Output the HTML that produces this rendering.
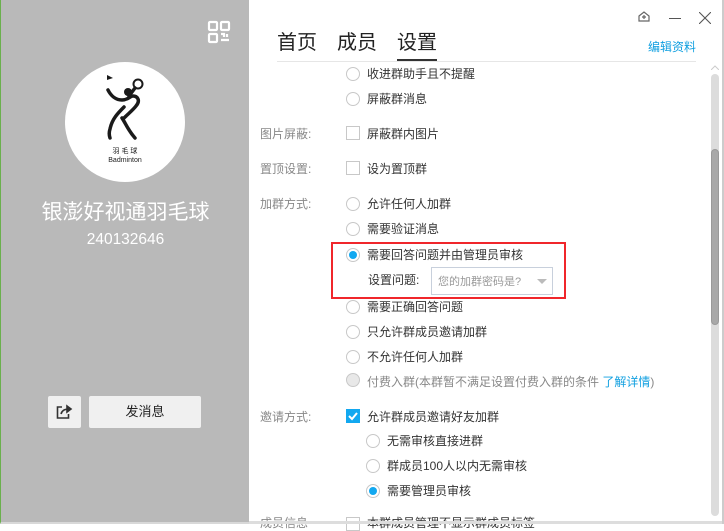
<!DOCTYPE html>
<html><head><meta charset="utf-8"><style>
*{margin:0;padding:0;box-sizing:border-box}
body{width:724px;height:524px;overflow:hidden;background:#fff;font-family:"Liberation Sans","Noto Sans CJK SC",sans-serif;position:relative}
.abs{position:absolute}
#left{left:0;top:0;width:249px;height:524px;background:#b9b9b9;border-left:1px solid #6ab04c;border-bottom:2px solid #d8d8d8}
.t{position:absolute;font-size:12px;color:#333;white-space:nowrap;line-height:14px}
.lbl{position:absolute;font-size:12px;color:#888;left:260px;line-height:14px}
.rad{position:absolute;width:14px;height:14px;border:1px solid #c8c8c8;border-radius:50%;background:#fff}
.rad.on::after{content:"";position:absolute;left:2px;top:2px;width:8px;height:8px;border-radius:50%;background:#12a8f0}
.chk{position:absolute;width:14px;height:14px;border:1px solid #c8c8c8;background:#fff}
</style></head><body>
<div id="left" class="abs">
 <svg class="abs" style="left:206px;top:20px" width="24" height="24" viewBox="0 0 24 24" fill="none" stroke="#fff" stroke-width="2.2">
  <rect x="2" y="2" width="8" height="8" rx="1"/><rect x="14" y="2" width="8" height="8" rx="1"/><rect x="2" y="14" width="8" height="8" rx="1"/>
  <path d="M14 14h3v3M20 14v3M14 20h8"/>
 </svg>
 <div class="abs" style="left:64px;top:62px;width:120px;height:120px;border-radius:50%;background:#fff"></div>
 <svg class="abs" style="left:64px;top:62px" width="120" height="120" viewBox="0 0 120 120" fill="none" stroke="#1a1a1a" stroke-width="3.5" stroke-linecap="round">
  <path d="M42 13l6 3-6 2z" fill="#1a1a1a" stroke="none"/>
  <circle cx="73" cy="22" r="4.5" stroke-width="2"/>
  <path d="M70 26l-6 8"/>
  <path d="M43 28c3 6 8 10 14 10 6 0 8-4 11-4 4 0 8 4 3 10-3 4-8 8-12 12"/>
  <path d="M59 45c-6 6-12 12-14 22-1 3-1 6 0 9"/>
  <path d="M57 56c4 6 6 12 13 20"/>
  <circle cx="63" cy="30" r="4" fill="#1a1a1a" stroke="none"/>
 </svg>
 <div class="abs" style="left:64px;top:146px;width:120px;text-align:center;font-size:7px;color:#222">羽 毛 球</div>
 <div class="abs" style="left:64px;top:157px;width:120px;text-align:center;font-size:7px;color:#222">Badminton</div>
 <div class="abs" style="left:0;top:196px;width:249px;text-align:center;font-size:21px;color:#fff">银澎好视通羽毛球</div>
 <div class="abs" style="left:0;top:231px;width:249px;text-align:center;font-size:15.5px;color:#fff">240132646</div>
 <div class="abs" style="left:47px;top:396px;width:33px;height:32px;background:#f0f0f0;border-radius:2px"></div>
 <svg class="abs" style="left:55px;top:404px" width="17" height="16" viewBox="0 0 17 16" fill="none" stroke="#333" stroke-width="1.6"><path d="M6 3H1.5v11h11V10"/><path d="M5 10c1-4 4-5 8-5" /><path d="M11 2l4 3-4 3z" fill="#333"/></svg>
 <div class="abs" style="left:88px;top:396px;width:112px;height:32px;background:#f0f0f0;border-radius:2px;text-align:center;line-height:32px;font-size:13px;color:#222">发消息</div>
</div>
<div class="abs" style="left:722px;top:0;width:2px;height:524px;background:#ccc"></div>
<!-- top icons -->
<svg class="abs" style="left:637px;top:10px" width="14" height="14" viewBox="0 0 14 14" fill="none" stroke="#666" stroke-width="1.2"><path d="M2 6l5-4 5 4v5H2z"/><path d="M7 5v4M5 7h4"/></svg>
<div class="abs" style="left:669px;top:18px;width:12px;height:1px;background:#555"></div>
<svg class="abs" style="left:699px;top:12px" width="12" height="12" viewBox="0 0 12 12" stroke="#555" stroke-width="1.1"><path d="M0 0L12 12M12 0L0 12"/></svg>
<!-- tabs -->
<div class="t" style="left:277px;top:31px;font-size:20px;line-height:24px;color:#222">首页</div>
<div class="t" style="left:337px;top:31px;font-size:20px;line-height:24px;color:#222">成员</div>
<div class="t" style="left:397px;top:31px;font-size:20px;line-height:24px;color:#222">设置</div>
<div class="abs" style="left:397px;top:59px;width:40px;height:2px;background:#333"></div>
<div class="abs" style="left:277px;top:61px;width:419px;height:1px;background:#e6e6e6"></div>
<div class="t" style="left:648px;top:40px;font-size:12px;color:#12a0e0">编辑资料</div>
<!-- scrollbar -->
<div class="abs" style="left:711px;top:74px;width:8px;height:442px;background:#dcdcdc;border-radius:4px"></div>
<div class="abs" style="left:711px;top:149px;width:8px;height:176px;background:#a8a8a8;border:1px solid #999;border-radius:4px"></div>
<svg class="abs" style="left:711px;top:65px" width="8" height="5"><path d="M0 5L4 1 8 5" fill="none" stroke="#ccc"/></svg>
<!-- rows -->
<div class="rad" style="left:346px;top:67px"></div><div class="t" style="left:367px;top:67px">收进群助手且不提醒</div>
<div class="rad" style="left:346px;top:92px"></div><div class="t" style="left:367px;top:92px">屏蔽群消息</div>
<div class="lbl" style="top:127px">图片屏蔽:</div>
<div class="chk" style="left:346px;top:126px"></div><div class="t" style="left:367px;top:127px">屏蔽群内图片</div>
<div class="lbl" style="top:162px">置顶设置:</div>
<div class="chk" style="left:346px;top:161px"></div><div class="t" style="left:367px;top:162px">设为置顶群</div>
<div class="lbl" style="top:197px">加群方式:</div>
<div class="rad" style="left:346px;top:197px"></div><div class="t" style="left:367px;top:197px">允许任何人加群</div>
<div class="rad" style="left:346px;top:222px"></div><div class="t" style="left:367px;top:222px">需要验证消息</div>
<div class="abs" style="left:331px;top:242px;width:235px;height:57px;border:2px solid #f0262b"></div>
<div class="rad on" style="left:346px;top:248px"></div><div class="t" style="left:367px;top:248px">需要回答问题并由管理员审核</div>
<div class="t" style="left:368px;top:273px">设置问题:</div>
<div class="abs" style="left:431px;top:267px;width:122px;height:28px;border:1px solid #c8d0dc"></div>
<div class="t" style="left:438px;top:275px;color:#999;font-size:11px">您的加群密码是?</div>
<div class="abs" style="left:537px;top:279px;width:0;height:0;border-left:5px solid transparent;border-right:5px solid transparent;border-top:5px solid #bbb"></div>
<div class="rad" style="left:346px;top:300px"></div><div class="t" style="left:367px;top:300px">需要正确回答问题</div>
<div class="rad" style="left:346px;top:325px"></div><div class="t" style="left:367px;top:325px">只允许群成员邀请加群</div>
<div class="rad" style="left:346px;top:350px"></div><div class="t" style="left:367px;top:350px">不允许任何人加群</div>
<div class="rad" style="left:346px;top:373px;background:#e8e8e8"></div><div class="t" style="left:367px;top:375px;color:#888">付费入群(本群暂不满足设置付费入群的条件 <span style="color:#12a0e0">了解详情</span>)</div>
<div class="lbl" style="top:410px">邀请方式:</div>
<div class="abs" style="left:346px;top:409px;width:14px;height:14px;background:#12a8f0"></div>
<svg class="abs" style="left:346px;top:409px" width="14" height="14"><path d="M3 7l3 3 5-6" fill="none" stroke="#fff" stroke-width="2"/></svg>
<div class="t" style="left:367px;top:410px">允许群成员邀请好友加群</div>
<div class="rad" style="left:366px;top:434px"></div><div class="t" style="left:387px;top:434px">无需审核直接进群</div>
<div class="rad" style="left:366px;top:459px"></div><div class="t" style="left:387px;top:459px">群成员100人以内无需审核</div>
<div class="rad on" style="left:366px;top:484px"></div><div class="t" style="left:387px;top:484px">需要管理员审核</div>
<div class="lbl" style="top:516px">成员信息</div>
<div class="chk" style="left:346px;top:517px"></div><div class="t" style="left:367px;top:516px">本群成员管理不显示群成员标签</div>
<div class="abs" style="left:249px;top:521px;width:473px;height:3px;background:#ddd"></div>
</body></html>
